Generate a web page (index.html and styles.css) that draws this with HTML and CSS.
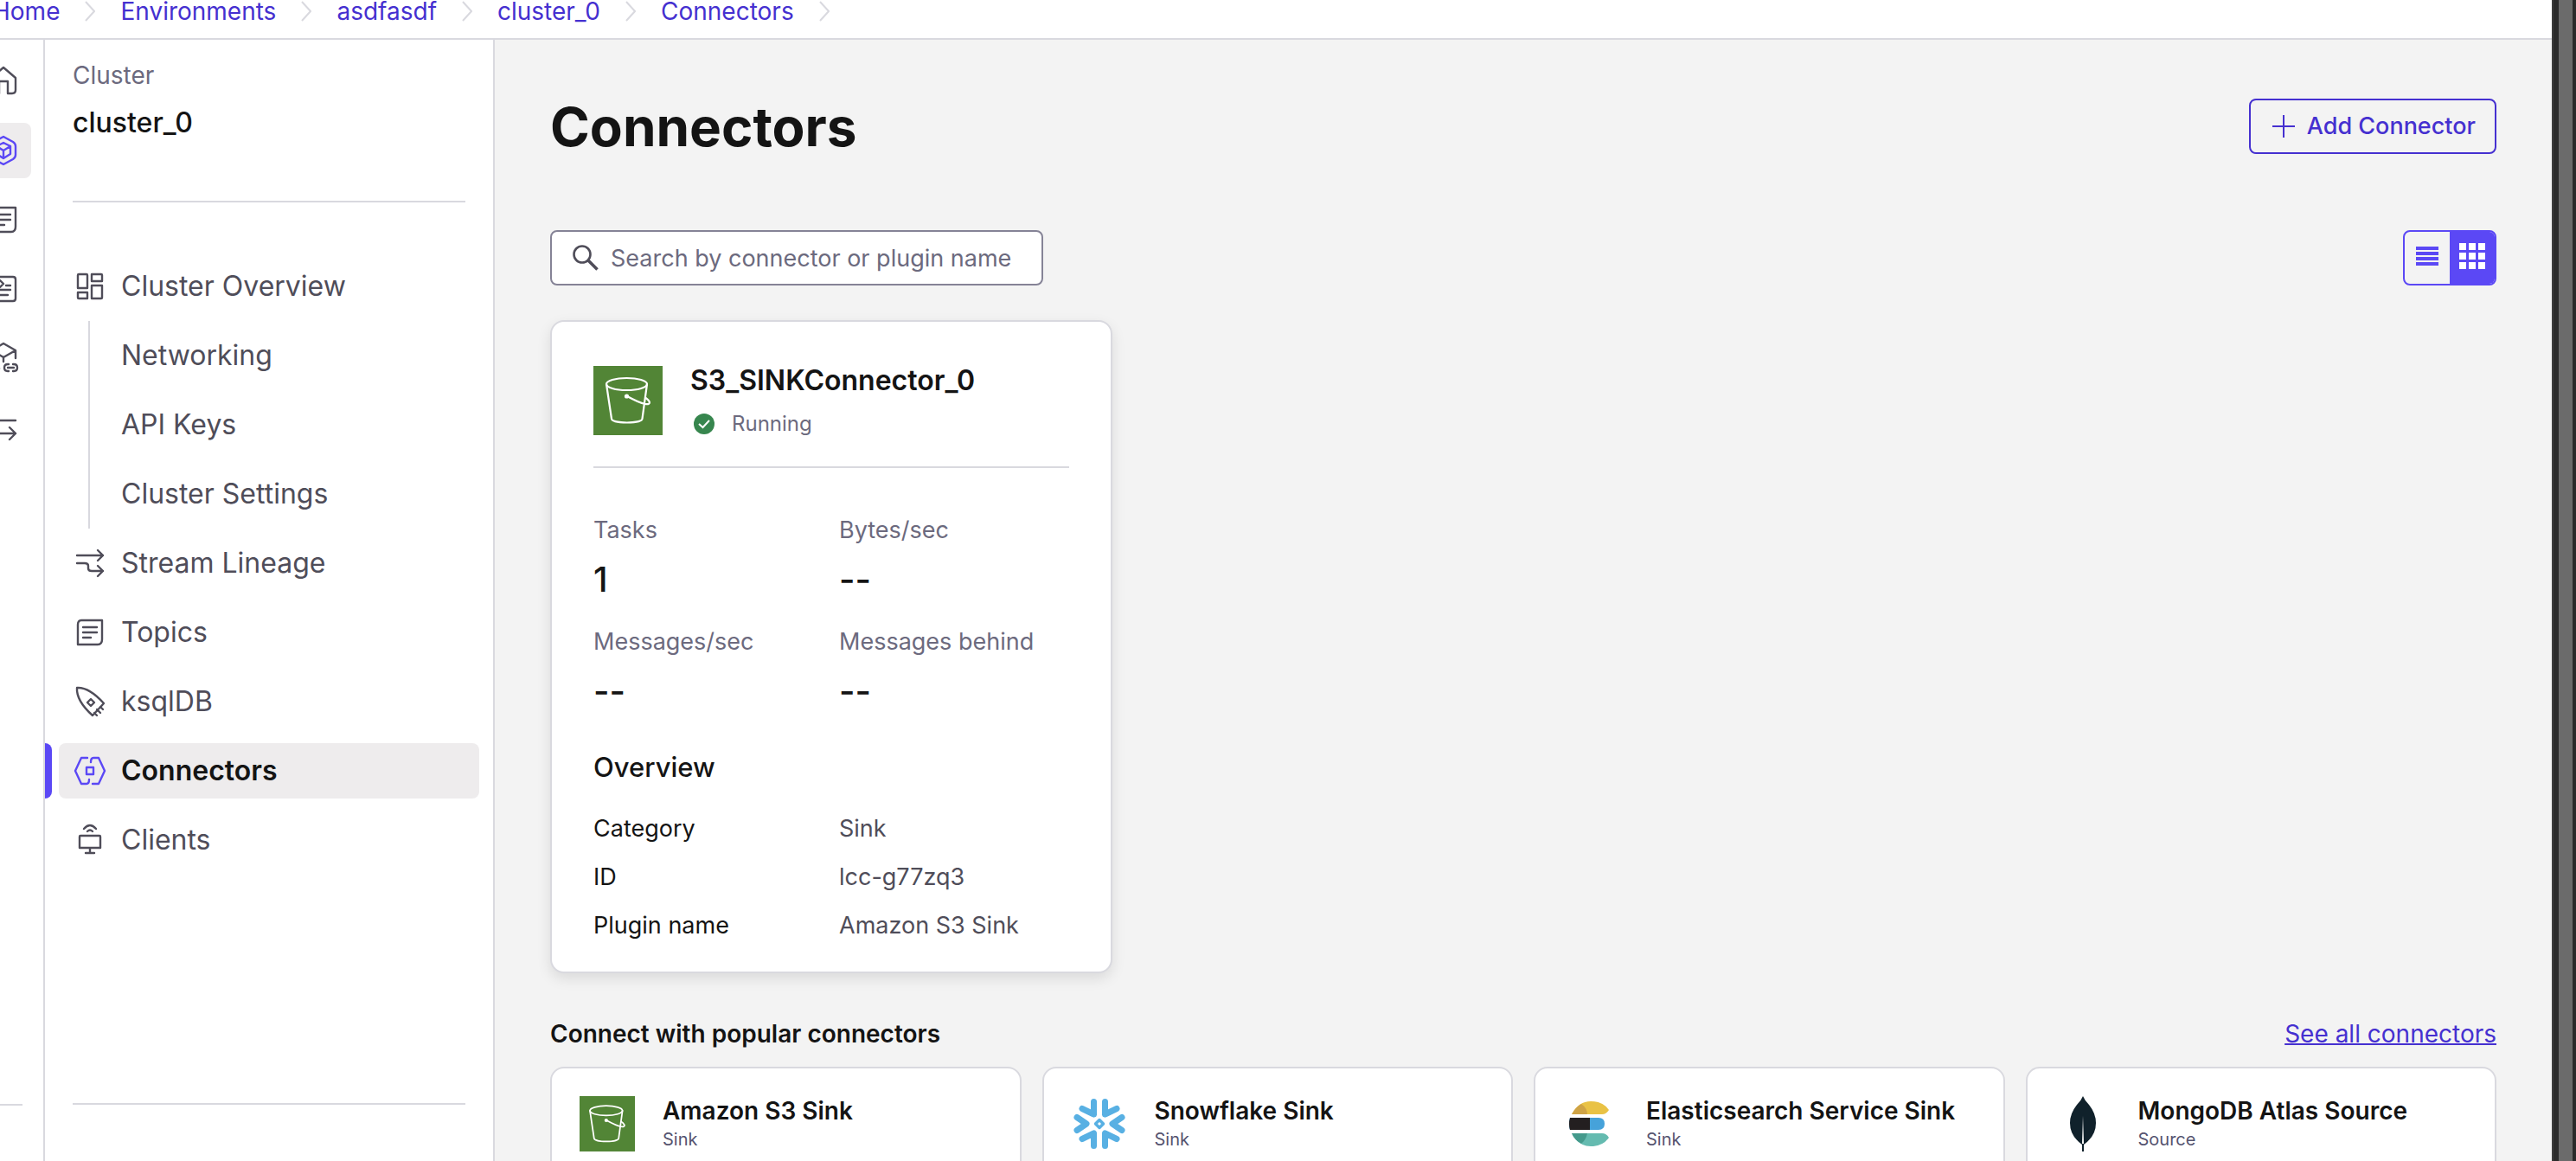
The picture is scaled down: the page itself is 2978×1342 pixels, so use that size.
FILE: index.html
```html
<!DOCTYPE html>
<html lang="en">
<head>
<meta charset="utf-8">
<title>Connectors</title>
<meta name="viewport" content="width=device-width, initial-scale=1">
<link rel="stylesheet" href="styles.css">
</head>
<body>
<svg class="defs" aria-hidden="true">
  <symbol id="i-chevron" viewBox="0 0 12 24"><path d="M1 1l10 11L1 23" fill="none" stroke="currentColor" stroke-width="2"/></symbol>
  <symbol id="i-topics" viewBox="0 0 32 32"><path d="M6 2H30V24Q30 30 25 30H2V7Q2 2 6 2ZM8 10H24M8 16H24M8 22H17"/></symbol>
  <symbol id="i-bucket" viewBox="0 0 80 80">
    <rect width="80" height="80" fill="#528536"/>
    <g fill="none" stroke="#fff" stroke-width="2.2" stroke-linecap="round" stroke-linejoin="round">
      <ellipse cx="38.500" cy="21" rx="23.500" ry="7"/>
      <path d="M15 21L21 61C21.500 67 56 67 56.500 61L62 21"/>
      <path d="M39 35C48 40 55 43 60 44C67 45 66 41 60.500 37"/>
    </g>
    <circle cx="38.500" cy="35" r="2.600" fill="#fff"/>
  </symbol>
</svg>
<div class="app">
  <div class="page">
    <header class="topbar">
      <nav class="crumbs" aria-label="Breadcrumb">
        <a href="#">Home</a><svg class="chev"><use href="#i-chevron"/></svg>
        <a href="#">Environments</a><svg class="chev"><use href="#i-chevron"/></svg>
        <a href="#">asdfasdf</a><svg class="chev"><use href="#i-chevron"/></svg>
        <a href="#">cluster_0</a><svg class="chev"><use href="#i-chevron"/></svg>
        <a href="#">Connectors</a><svg class="chev"><use href="#i-chevron"/></svg>
      </nav>
    </header>
    <div class="body">
      <nav class="rail" aria-label="Primary">
        <a href="#" aria-label="Home"><svg class="icon" viewBox="0 0 32 32"><path d="M2 12L16 0L30 12V26Q30 30 26 30H21V16H11V30H6Q2 30 2 26Z"/></svg></a>
        <a href="#" class="current" aria-label="Environments"><svg class="icon" viewBox="0 0 32 32"><path d="M16 0L27 6Q30 8 30 11V21Q30 24 27 26L16 32L5 26Q2 24 2 21V11Q2 8 5 6ZM16 7L24 11V20L16 25L8 20V11ZM8 11L16 16L24 11M16 16V25"/></svg></a>
        <a href="#" aria-label="Topics"><svg class="icon"><use href="#i-topics"/></svg></a>
        <a href="#" aria-label="Schemas"><svg class="icon" viewBox="0 0 32 32"><path d="M6 2H27Q30 2 30 5V27Q30 30 27 30H5Q2 30 2 27V6Q2 2 6 2ZM12 6L16 10L12 14L8 10ZM19 12H24M8 17H24M8 23H21"/></svg></a>
        <a href="#" aria-label="Cluster links"><svg class="icon wide" viewBox="0 0 36 36"><path d="M18 22V17L4 9V24L13 30M4 9L18 1L32 9V18M18 17L32 9M24 25H23Q19 25 19 29T23 33H24M29 25H30Q34 25 34 29T30 33H29M23 29H30"/></svg></a>
        <a href="#" aria-label="Stream sharing"><svg class="icon" viewBox="0 0 32 32"><path d="M2 8H30M2 23H30M23 16L30 23L23 30"/></svg></a>
        <hr>
      </nav>
      <aside class="side">
        <div class="side-head">
          <p class="side-label">Cluster</p>
          <p class="side-name">cluster_0</p>
        </div>
        <ul class="menu">
          <li><a href="#"><svg class="icon" viewBox="0 0 32 32"><path d="M3 2H12Q13 2 13 3V18H2V3Q2 2 3 2ZM18 2H29Q30 2 30 3V10H18ZM18 15H30V29Q30 30 29 30H18ZM2 23H13V30H3Q2 30 2 29Z"/></svg>Cluster Overview</a>
            <ul class="submenu">
              <li><a href="#">Networking</a></li>
              <li><a href="#">API Keys</a></li>
              <li><a href="#">Cluster Settings</a></li>
            </ul>
          </li>
          <li><a href="#"><svg class="icon" viewBox="0 0 32 32"><path d="M1 7H31M25 1L31 7L25 13M1 16H10Q14 16 14 19V22Q14 25 18 25H31M25 19L31 25L25 31"/></svg>Stream Lineage</a></li>
          <li><a href="#"><svg class="icon"><use href="#i-topics"/></svg>Topics</a></li>
          <li><a href="#"><svg class="icon wide" viewBox="0 0 36 36"><path d="M3 2Q17 1 34 20L21 34Q2 17 3 2ZM19 15L23 19L19 23L15 19ZM23 31L26 34M26 27L30 31M30 24L33 27"/></svg>ksqlDB</a></li>
          <li><a href="#" class="active" aria-current="page"><svg class="icon wide" viewBox="0 0 36 36"><path d="M15 3H8L1 18L8 33H14Q17 33 17 28M21 33H28L35 18L28 3H22Q19 3 19 8M14 14H22V22H14Z"/></svg>Connectors</a></li>
          <li><a href="#"><svg class="icon wide" viewBox="0 0 36 36"><path d="M7 13H29Q30 13 30 14V27H6V14Q6 13 7 13ZM18 27V33M13 33H23M11 5Q18 -3 25 5M15 8Q18 5 21 8"/></svg>Clients</a></li>
        </ul>
        <div class="side-foot"></div>
      </aside>
      <main class="main">
        <div class="title-row">
          <h1>Connectors</h1>
          <button type="button" class="add"><svg width="26" height="26" viewBox="0 0 26 26"><path d="M13 0V26M0 13H26" stroke="currentColor" stroke-width="2" fill="none"/></svg>Add Connector</button>
        </div>
        <div class="toolbar">
          <label class="search">
            <svg width="30" height="30" viewBox="0 0 30 30" fill="none" stroke="currentColor"><circle cx="11" cy="11" r="9.500" stroke-width="2.600"/><path d="M17.500 17.500L28.500 28.500" stroke-width="3.600"/></svg>
            <input type="text" aria-label="Search connectors" placeholder="Search by connector or plugin name">
          </label>
          <div class="toggle">
            <button type="button" aria-label="List view"><svg width="26" height="22" viewBox="0 0 26 22"><path d="M0 2H26M0 8H26M0 14H26M0 20H26" stroke="currentColor" stroke-width="4"/></svg></button>
            <button type="button" class="on" aria-label="Grid view" aria-pressed="true"><svg width="30" height="30" viewBox="0 0 30 30"><path d="M0 4H30M0 15H30M0 26H30" stroke="currentColor" stroke-width="8" stroke-dasharray="8 3"/></svg></button>
          </div>
        </div>
        <article class="card">
          <div class="card-head">
            <svg class="logo" aria-hidden="true"><use href="#i-bucket"/></svg>
            <div>
              <h2>S3_SINKConnector_0</h2>
              <p class="status"><svg width="24" height="24" viewBox="0 0 24 24"><circle cx="12" cy="12" r="12" fill="#37864e"/><path d="M6 12L10.500 16L18 8" fill="none" stroke="#fff" stroke-width="2"/></svg>Running</p>
            </div>
          </div>
          <dl class="stats">
            <div><dt>Tasks</dt><dd>1</dd></div>
            <div><dt>Bytes/sec</dt><dd>--</dd></div>
            <div><dt>Messages/sec</dt><dd>--</dd></div>
            <div><dt>Messages behind</dt><dd>--</dd></div>
          </dl>
          <h3>Overview</h3>
          <dl class="facts">
            <dt>Category</dt><dd>Sink</dd>
            <dt>ID</dt><dd>lcc-g77zq3</dd>
            <dt>Plugin name</dt><dd>Amazon S3 Sink</dd>
          </dl>
        </article>
        <div class="popular-head">
          <h2>Connect with popular connectors</h2>
          <a href="#">See all connectors</a>
        </div>
        <div class="popular">
          <article class="mini">
            <svg class="mini-logo" aria-hidden="true"><use href="#i-bucket"/></svg>
            <div><h3>Amazon S3 Sink</h3><p>Sink</p></div>
          </article>
          <article class="mini">
            <svg class="mini-logo" viewBox="0 0 64 64" aria-hidden="true">
              <path d="M12 14.500L25.500 21M52 14.500L38.500 21M25.500 21V6.500M38.500 21V6.500M12 49.500L25.500 43M52 49.500L38.500 43M25.500 43V57.500M38.500 43V57.500M6 24.500L17 32L6 39.500M58 24.500L47 32L58 39.500" fill="none" stroke="#58b0e3" stroke-width="7" stroke-linecap="round" stroke-linejoin="round"/>
              <path d="M32 27.500L36.500 32L32 36.500L27.500 32Z" fill="none" stroke="#58b0e3" stroke-width="3.500" stroke-linejoin="round"/>
            </svg>
            <div><h3>Snowflake Sink</h3><p>Sink</p></div>
          </article>
          <article class="mini">
            <svg class="mini-logo" viewBox="0 0 64 64" aria-hidden="true">
              <path d="M10 21Q18 6 32 6Q46 6 53 16Q50 21 45 21Z" fill="#e9c245"/><path d="M10 21Q14 13 21 9Q28 14 28 21Z" fill="#cfa345"/>
              <path d="M8 25H41Q48 25 48 32Q48 39 41 39H8Q6 32 8 25Z" fill="#46a2da"/><path d="M8 25H31V39H8Q6 32 8 25Z" fill="#231f20"/>
              <path d="M10 43H45Q50 43 53 48Q46 58 32 58Q18 58 10 43Z" fill="#65bbb0"/><path d="M10 43H28Q27 50 21 55Q13 51 10 43Z" fill="#449a8c"/>
            </svg>
            <div><h3>Elasticsearch Service Sink</h3><p>Sink</p></div>
          </article>
          <article class="mini">
            <svg class="mini-logo" viewBox="0 0 64 64" aria-hidden="true">
              <path d="M32 0Q34 5 39 10Q47 20 47 31Q47 46 33 56V64H31V56Q17 46 17 31Q17 20 25 10Q30 5 32 0Z" fill="#10212b"/>
              <path d="M32 22L33 55H31Z" fill="#fff"/>
            </svg>
            <div><h3>MongoDB Atlas Source</h3><p>Source</p></div>
          </article>
        </div>
      </main>
    </div>
  </div>
  <div class="edge"><div></div></div>
</div>
</body>
</html>
```
FILE: styles.css
```css
:root {
  --ink: #141414;
  --text: #4f4d59;
  --muted: #6c6a7e;
  --line: #d9d9df;
  --link: #4530d0;
  --accent: #5b48f5;
  --hover: #eeeced;
}
* { box-sizing: border-box; margin: 0; padding: 0; }
body { font-family: Inter, "Liberation Sans", sans-serif; font-size: 28px; line-height: 40px; color: var(--ink); }
a { color: inherit; text-decoration: none; }
ul { list-style: none; }
button, input { font: inherit; color: inherit; }
svg { flex: none; }
.defs { display: none; }

.app { display: flex; height: 100vh; overflow: hidden; }
.page { flex: 1; min-width: 0; display: flex; flex-direction: column; background: #fff; }
.edge { flex: none; width: 28px; padding: 0 4px 0 6px; border-left: 2px solid #3c3c3c; background: #2b2b2b; }
.edge div { height: 100%; background: #6b6b6b; }

.topbar { height: 46px; border-bottom: 2px solid var(--line); }
.crumbs { display: flex; gap: 29px; margin-left: -9px; line-height: 26px; color: var(--link); }
.chev { width: 12px; height: 24px; margin-top: 1px; color: var(--line); }

.body { flex: 1; min-height: 0; display: flex; }
.icon { width: 32px; height: 32px; fill: none; stroke: currentColor; stroke-width: 2.4; stroke-linecap: round; stroke-linejoin: round; overflow: visible; }
.icon.wide { width: 36px; height: 36px; margin: 0 -2px; }

.rail { flex: none; width: 52px; overflow: hidden; display: flex; flex-direction: column; align-items: flex-end; gap: 16px; padding: 16px 14px 64px 0; border-right: 2px solid var(--line); color: var(--text); }
.rail a { width: 64px; height: 64px; display: grid; place-items: center; border-radius: 8px; }
.rail .current { background: var(--hover); color: var(--accent); }
.rail hr { width: 40px; margin: auto 10px 0 0; border: 0; border-top: 2px solid var(--line); }

.side { flex: none; width: 520px; display: flex; flex-direction: column; border-right: 2px solid var(--line); }
.side-head { margin: 0 32px; padding: 21px 0 66px; border-bottom: 2px solid var(--line); }
.side-label { color: var(--muted); }
.side-name { margin-top: 11px; font-size: 32px; line-height: 48px; font-weight: 500; }
.menu { padding: 65px 16px 0; font-size: 32px; color: var(--text); }
.menu a { display: flex; align-items: center; gap: 20px; height: 64px; padding-left: 20px; margin-bottom: 16px; border-radius: 8px; }
.submenu { margin: -8px 0 8px 34px; padding: 8px 0; border-left: 2px solid var(--line); }
.submenu a { padding-left: 36px; }
.submenu li:last-child a { margin-bottom: 0; }
.menu .active { position: relative; background: var(--hover); color: var(--ink); font-weight: 600; }
.active .icon { color: var(--accent); }
.active::before { content: ""; position: absolute; left: -16px; top: 0; bottom: 0; width: 8px; background: var(--accent); border-radius: 0 8px 8px 0; }
.side-foot { margin: auto 32px 0; height: 67px; border-top: 2px solid var(--line); }

.main { flex: 1; min-width: 0; overflow: auto; scrollbar-width: none; padding: 68px 64px; background: #f3f3f3; }
.title-row, .toolbar, .popular-head { display: flex; justify-content: space-between; align-items: center; }
h1 { padding-top: 2px; font-size: 62px; line-height: 62px; font-weight: 700; }
.add { display: flex; align-items: center; gap: 14px; height: 64px; padding: 0 22px 0 25px; border: 2px solid var(--link); border-radius: 8px; background: none; color: var(--link); font-size: 27px; font-weight: 500; }
.toolbar { margin-top: 88px; }
.search { display: flex; align-items: center; gap: 14px; width: 570px; height: 64px; padding: 0 24px; border: 2px solid #858396; border-radius: 8px; background: #fff; color: var(--text); }
.search input { flex: 1; min-width: 0; margin-right: -16px; padding-top: 2px; border: 0; outline: 0; background: none; font-size: 27px; }
.search input::placeholder { color: var(--muted); opacity: 1; }
.toggle { display: flex; width: 108px; height: 64px; border: 2px solid var(--accent); border-radius: 8px; overflow: hidden; }
.toggle button { flex: 1; display: grid; place-items: center; padding-bottom: 4px; border: 0; background: none; color: var(--accent); }
.toggle .on { background: var(--accent); color: #fff; }

.card { width: 650px; margin-top: 40px; padding: 48px 48px 33px; border: 2px solid var(--line); border-radius: 16px; background: #fff; box-shadow: 0 6px 16px rgba(0, 0, 0, .1); }
.card-head { display: flex; align-items: center; gap: 32px; padding-bottom: 33px; border-bottom: 2px solid var(--line); }
.logo { width: 80px; height: 80px; }
.card h2 { font-size: 32px; line-height: 40px; font-weight: 600; }
.status { display: flex; align-items: center; gap: 20px; margin-top: 14px; padding-left: 4px; font-size: 24px; line-height: 32px; color: var(--muted); }
.stats { display: grid; grid-template-columns: 1fr 1fr; gap: 28px 18px; padding-top: 52px; font-size: 27px; }
.stats dt { color: var(--muted); }
.stats dd { margin-top: 13px; font-size: 40px; line-height: 48px; font-weight: 500; }
.card h3 { margin: 44px 0 31px; font-size: 31px; font-weight: 500; }
.facts { display: grid; grid-template-columns: 1fr 1fr; gap: 16px 18px; font-size: 27px; }
.facts dd { color: var(--text); }

.popular-head { margin-top: 50px; }
.popular-head h2 { font-size: 28px; font-weight: 600; }
.popular-head a { color: var(--link); text-decoration: underline; text-decoration-thickness: 2px; }
.popular { display: grid; grid-template-columns: repeat(4, 1fr); gap: 24px; margin-top: 18px; }
.mini { display: flex; align-items: flex-start; gap: 32px; min-height: 240px; padding: 32px; border: 2px solid var(--line); border-radius: 16px; background: #fff; }
.mini-logo { width: 64px; height: 64px; }
.mini h3 { font-size: 28px; line-height: 34px; font-weight: 600; }
.mini p { font-size: 20px; line-height: 32px; color: #55536f; }
```
